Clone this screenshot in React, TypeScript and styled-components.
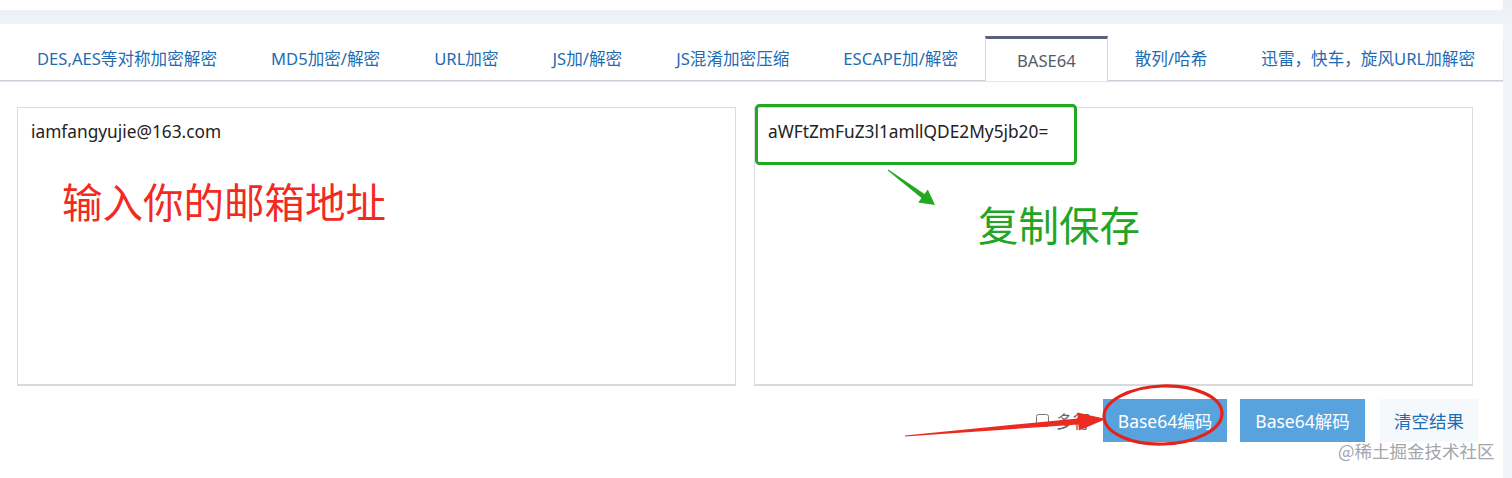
import React from "react";
import styled, { createGlobalStyle } from "styled-components";

const Global = createGlobalStyle`
  html, body { margin: 0; padding: 0; background: #f1f4f8; }
  body { font-family: "Noto Sans", "Noto Sans CJK SC", sans-serif; }
  * { box-sizing: border-box; }
`;

const Page = styled.div`
  position: relative;
  width: 1512px;
  height: 478px;
  overflow: hidden;
  display: flex;
  flex-direction: column;
  background: linear-gradient(180deg, #ebeff4 0px, #f1f4f8 30px, #f1f4f8 100%);
`;

const TopCard = styled.div`
  flex: none;
  width: 1503px;
  height: 10px;
  background: #fff;
`;

const Main = styled.main`
  margin-top: 14px;
  width: 1503px;
  flex: 1;
  background: #fff;
  display: flex;
  flex-direction: column;
`;

const TabBar = styled.nav`
  display: flex;
  align-items: flex-end;
  height: 45px;
  margin-top: 12px;
  padding-left: 10px;
  border-bottom: 1px solid #c9ced8;
  box-shadow: 0 1px 1px rgba(180, 186, 200, 0.35);
`;

const Tab = styled.div<{ $active?: boolean }>`
  height: ${(p) => (p.$active ? 45 : 44)}px;
  margin-bottom: ${(p) => (p.$active ? -1 : 0)}px;
  display: flex;
  align-items: center;
  padding: 0 ${(p) => (p.$active ? 31 : 27)}px;
  font-size: 16.6px;
  white-space: nowrap;
  color: ${(p) => (p.$active ? "#555b66" : "#1d6cb3")};
  background: #fff;
  border-top: ${(p) => (p.$active ? "3px solid #59627a" : "none")};
  border-left: ${(p) => (p.$active ? "1px solid #d3d7df" : "none")};
  border-right: ${(p) => (p.$active ? "1px solid #d3d7df" : "none")};
  position: relative;
  z-index: 1;
`;

const Content = styled.section`
  padding: 26px 0 0 17px;
  display: flex;
  flex-direction: column;
`;

const EditorRow = styled.div`
  display: flex;
  gap: 18px;
`;

const Editor = styled.div`
  position: relative;
  width: 719px;
  height: 279px;
  border: 1px solid #d9dce2;
  border-bottom: 2px solid #d7dade;
  background: #fff;
  padding: 12px 13px;
  font-size: 17.3px;
  color: #222;
  line-height: 24px;
`;

const Callout = styled.div<{ $color: string; $left: number; $top: number }>`
  position: absolute;
  left: ${(p) => p.$left}px;
  top: ${(p) => p.$top}px;
  font-family: "Noto Sans CJK SC", sans-serif;
  font-size: 40.5px;
  line-height: 44px;
  color: ${(p) => p.$color};
  white-space: nowrap;
`;

const Actions = styled.div`
  display: flex;
  justify-content: flex-end;
  align-items: center;
  gap: 13px;
  margin-top: 13px;
  padding-right: 25px;
`;

const CheckLabel = styled.label`
  display: flex;
  align-items: center;
  gap: 7px;
  font-size: 17px;
  color: #666;
  font-family: "Noto Sans CJK SC", sans-serif;
`;

const Check = styled.input`
  margin: 0;
  width: 13px;
  height: 13px;
`;

const Button = styled.button<{ $variant?: "primary" | "plain"; $w: number; $gapBefore?: number }>`
  height: 43px;
  width: ${(p) => p.$w}px;
  margin-left: ${(p) => p.$gapBefore ?? 0}px;
  border: none;
  padding: 0;
  font-family: "Noto Sans", "Noto Sans CJK SC", sans-serif;
  font-size: 17.5px;
  color: ${(p) => (p.$variant === "plain" ? "#1d6cb3" : "#fff")};
  background: ${(p) => (p.$variant === "plain" ? "#f6f9fc" : "#58a3de")};
`;

const Watermark = styled.div`
  position: absolute;
  left: 1338px;
  top: 439px;
  font-family: "Noto Sans CJK SC", sans-serif;
  font-size: 17.5px;
  line-height: 24px;
  color: #a3a6ab;
  white-space: nowrap;
`;

const Overlay = styled.svg`
  position: absolute;
  left: 0;
  top: 0;
  pointer-events: none;
`;

const tabs = [
  "DES,AES等对称加密解密",
  "MD5加密/解密",
  "URL加密",
  "JS加/解密",
  "JS混淆加密压缩",
  "ESCAPE加/解密",
  "BASE64",
  "散列/哈希",
  "迅雷，快车，旋风URL加解密",
];

export default function App() {
  return (
    <Page>
      <Global />
      <TopCard />
      <Main>
        <TabBar>
          {tabs.map((t) => (
            <Tab key={t} $active={t === "BASE64"}>
              {t}
            </Tab>
          ))}
        </TabBar>
        <Content>
          <EditorRow>
            <Editor>
              iamfangyujie@163.com
              <Callout $color="#f22a1f" $left={44} $top={71}>
                输入你的邮箱地址
              </Callout>
            </Editor>
            <Editor>
              aWFtZmFuZ3l1amllQDE2My5jb20=
              <Callout $color="#22a523" $left={223} $top={94}>
                复制保存
              </Callout>
            </Editor>
          </EditorRow>
          <Actions>
            <CheckLabel>
              <Check type="checkbox" />
              多行
            </CheckLabel>
            <Button $w={124}>Base64编码</Button>
            <Button $w={125}>Base64解码</Button>
            <Button $variant="plain" $w={98} $gapBefore={2}>
              清空结果
            </Button>
          </Actions>
        </Content>
      </Main>
      <Watermark>@稀土掘金技术社区</Watermark>
      <Overlay width="1512" height="478" viewBox="0 0 1512 478">
        <rect x="756.5" y="105.5" width="319" height="58" rx="3" fill="none" stroke="#22a822" strokeWidth="3" />
        <polygon
          fill="#22a822"
          points="888.3,169.6 924.5,194 927.8,189.6 935,205 918.2,202.4 921.5,198 887.7,170.4"
        />
        <ellipse
          cx="1163"
          cy="415"
          rx="59"
          ry="29"
          fill="none"
          stroke="#e5231b"
          strokeWidth="3.2"
          transform="rotate(-2 1163 415)"
        />
        <polygon
          fill="#ec2a1f"
          points="904.95,435.4 1077.85,418.4 1077.3,412.4 1106,419 1078.9,430.4 1078.35,424.4 905.05,436.6"
        />
      </Overlay>
    </Page>
  );
}
